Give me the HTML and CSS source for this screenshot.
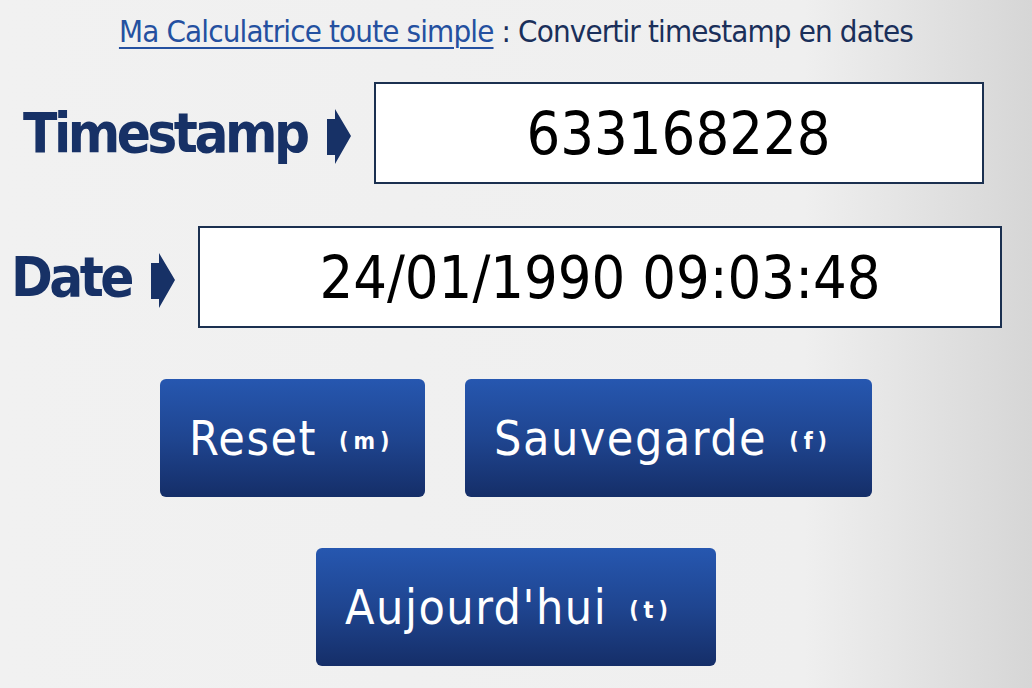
FILE: index.html
```html
<!DOCTYPE html>
<html lang="fr">
<head>
<meta charset="utf-8">
<title>Convertir timestamp en dates</title>
<link rel="stylesheet" href="styles.css">
</head>
<body>
<div class="page">
  <h1 class="title"><a href="#" class="title-link">Ma Calculatrice toute simple</a> : Convertir timestamp en dates</h1>

  <div class="row row-ts">
    <div class="label label-ts"><label>Timestamp</label></div>
    <svg class="arrow" viewBox="0 0 24 55" width="24" height="55"><polygon points="0,10 8,10 8,0 24,27 8,55 8,46 0,46" fill="#173166"/></svg>
    <div class="field field-ts">633168228</div>
  </div>

  <div class="row row-date">
    <div class="label label-date"><label>Date</label></div>
    <svg class="arrow" viewBox="0 0 24 55" width="24" height="55"><polygon points="0,10 8,10 8,0 24,27 8,55 8,46 0,46" fill="#173166"/></svg>
    <div class="field field-date">24/01/1990 09:03:48</div>
  </div>

  <div class="buttons">
    <button class="btn btn-reset">Reset<span class="key">(m)</span></button>
    <button class="btn btn-save">Sauvegarde<span class="key">(f)</span></button>
  </div>
  <div class="buttons">
    <button class="btn btn-today">Aujourd'hui<span class="key">(t)</span></button>
  </div>
</div>
</body>
</html>
```

FILE: styles.css
```css
html, body {
  margin: 0;
  padding: 0;
}
body {
  width: 1032px;
  height: 688px;
  overflow: hidden;
  background: linear-gradient(to right, #f1f1f1 0%, #efefef 78%, #d6d6d6 100%);
  font-family: "DejaVu Sans Condensed", "DejaVu Sans", sans-serif;
}
.page {
  display: flex;
  flex-direction: column;
  align-items: center;
}
.title {
  margin: 12px 0 0 0;
  font-size: 31px;
  letter-spacing: -0.85px;
  font-weight: normal;
  line-height: 38px;
  color: #1a2f5a;
  white-space: nowrap;
}
.title-link {
  color: #2450a0;
  text-decoration: underline;
  text-underline-offset: 5px;
  text-decoration-thickness: 2px;
}
.row {
  display: flex;
  align-items: center;
}
.row-ts {
  margin-top: 32px;
}
.row-date {
  margin-top: 42px;
}
.label {
  display: flex;
  justify-content: flex-end;
  white-space: nowrap;
  font-size: 56px;
  font-weight: bold;
  letter-spacing: -3.5px;
  color: #173166;
  line-height: 1;
}
.label-ts {
  width: 258px;
}
.label-date {
  width: 101px;
}
.arrow {
  display: block;
  flex: none;
  margin-left: 20px;
  margin-right: 23px;
  margin-top: 6px;
}
.field {
  box-sizing: border-box;
  height: 102px;
  border: 2px solid #1b3050;
  background: #ffffff;
  display: flex;
  align-items: center;
  justify-content: center;
  font-size: 59px;
  color: #000000;
}
.field-ts {
  width: 610px;
}
.field-date {
  width: 804px;
}
.buttons {
  display: flex;
  gap: 40px;
  margin-top: 51px;
}
.btn {
  box-sizing: border-box;
  height: 118px;
  border: none;
  border-radius: 6px;
  background: linear-gradient(to bottom, #2657b0 0%, #1f4590 50%, #152e68 100%);
  color: #ffffff;
  font-family: "DejaVu Sans Condensed", "DejaVu Sans", sans-serif;
  font-size: 48px;
  letter-spacing: 1.5px;
  padding: 0 0 0 29px;
  display: flex;
  align-items: center;
  justify-content: flex-start;
}
.btn-reset {
  width: 265px;
}
.btn-save {
  width: 407px;
}
.btn-today {
  width: 400px;
}
.key {
  font-size: 23px;
  font-weight: bold;
  letter-spacing: 5px;
  margin-left: 22px;
  margin-top: 6px;
}
```
